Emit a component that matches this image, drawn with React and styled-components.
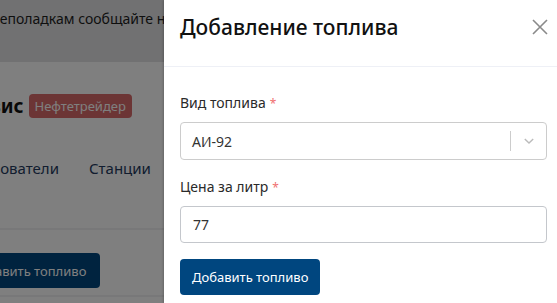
import styled, { createGlobalStyle } from 'styled-components';

const GlobalStyle = createGlobalStyle`
	html, body {
		margin: 0;
		padding: 0;
		background: #ffffff;
	}
	body {
		font-family: 'Noto Sans', 'Open Sans', Arial, sans-serif;
		overflow: hidden;
	}
	* {
		box-sizing: border-box;
	}
`;

const Screen = styled.div`
	position: relative;
	width: 557px;
	height: 303px;
	overflow: hidden;
	background: #ffffff;
`;

const Page = styled.div`
	display: flex;
	flex-direction: column;
	margin-left: -60px;
	width: 700px;
`;

const Banner = styled.div`
	height: 62px;
	padding: 9px 0 0 29px;
	background: #e2e2e4;
	font-size: 14px;
	color: #1f1f1f;
	white-space: nowrap;
`;

const Brand = styled.div`
	display: flex;
	align-items: center;
	gap: 5px;
	height: 88px;
	padding-left: 14px;
	white-space: nowrap;

	& h1 {
		margin: 0;
		font-size: 19px;
		font-weight: 700;
		color: #111111;
	}
`;

const Badge = styled.span`
	display: inline-flex;
	align-items: center;
	height: 24px;
	padding: 0 6px;
	border-radius: 4px;
	background: #d86a6a;
	color: #ffffff;
	font-size: 13px;
`;

const Tabs = styled.nav`
	display: flex;
	gap: 2px;
	height: 40px;
	padding-left: 2px;
	white-space: nowrap;
`;

const Tab = styled.div`
	display: flex;
	align-items: center;
	height: 40px;
	padding: 0 14px 2px;
	font-size: 15px;
	color: ${({ $active }) => ($active ? '#00467f' : '#243a5e')};
	border-bottom: 2px solid ${({ $active }) => ($active ? '#00467f' : 'transparent')};
`;

const Divider = styled.div`
	margin-top: 38px;
	height: 2px;
	background: #f1f1f3;
`;

const Toolbar = styled.div`
	display: flex;
	align-items: flex-start;
	height: 67px;
	padding: 23px 0 0 16px;
	border-bottom: 2px solid #f1f1f3;
`;

const DarkButton = styled.button`
	height: 35px;
	padding: 0 14px;
	border: none;
	border-radius: 4px;
	background: #00467f;
	color: #ffffff;
	font-family: inherit;
	font-size: 13px;
	white-space: nowrap;
`;

const Backdrop = styled.div`
	position: absolute;
	inset: 0;
	background: rgba(0, 0, 0, 0.5);
`;

const Drawer = styled.aside`
	position: absolute;
	top: 0;
	right: 0;
	bottom: 0;
	width: 393px;
	display: flex;
	flex-direction: column;
	background: #ffffff;
	box-shadow: -1px 0 2px rgba(0, 0, 0, 0.2);
`;

const DrawerHeader = styled.header`
	display: flex;
	align-items: center;
	justify-content: space-between;
	height: 67px;
	padding: 0 7px 12px 16px;
	border-bottom: 1px solid #eef0f6;

	& h2 {
		margin: 0;
		font-size: 21px;
		font-weight: 500;
		color: #111111;
	}
`;

const CloseButton = styled.button`
	display: flex;
	padding: 0;
	border: none;
	background: none;
	color: #8a8a8a;
`;

const Form = styled.form`
	display: flex;
	flex-direction: column;
	padding: 27px 10px 0 16px;
`;

const Field = styled.div`
	display: flex;
	flex-direction: column;
	gap: 9px;
	margin-bottom: 18px;
`;

const Label = styled.label`
	font-size: 14px;
	line-height: 18px;
	color: #2a2a2a;

	& span {
		margin-left: 4px;
		color: #f07070;
		font-size: 12px;
	}
`;

const SelectBox = styled.div`
	display: flex;
	align-items: center;
	height: 38px;
	border: 1px solid #cccccc;
	border-radius: 4px;
	font-size: 14px;
	color: #333333;
`;

const SelectValue = styled.div`
	flex: 1;
	padding-left: 11px;
`;

const Indicator = styled.div`
	display: flex;
	align-items: center;
	justify-content: center;
	width: 36px;
	height: 20px;
	border-left: 1px solid #cccccc;
	color: #bbbbbb;
`;

const Input = styled.input`
	height: 37px;
	padding: 0 12px;
	border: 1px solid #c4c7cc;
	border-radius: 4px;
	font-family: inherit;
	font-size: 14px;
	color: #333333;
	outline: none;
`;

const SubmitButton = styled(DarkButton)`
	align-self: flex-start;
	height: 36px;
	margin-top: -2px;
	padding: 0 12px;
`;

export default function App() {
	return (
		<Screen>
			<GlobalStyle />
			<Page>
				<Banner>По неполадкам сообщайте на почту support@nefte.ru</Banner>
				<Brand>
					<h1>Сервис</h1>
					<Badge>Нефтетрейдер</Badge>
				</Brand>
				<Tabs>
					<Tab>Пользователи</Tab>
					<Tab>Станции</Tab>
					<Tab $active>Топливо</Tab>
				</Tabs>
				<Divider />
				<Toolbar>
					<DarkButton>Добавить топливо</DarkButton>
				</Toolbar>
			</Page>
			<Backdrop />
			<Drawer>
				<DrawerHeader>
					<h2>Добавление топлива</h2>
					<CloseButton type="button" aria-label="Закрыть">
						<svg width="20" height="20" viewBox="0 0 20 20">
							<path d="M3 3 L17 17 M17 3 L3 17" stroke="currentColor" strokeWidth="1.6" fill="none" />
						</svg>
					</CloseButton>
				</DrawerHeader>
				<Form onSubmit={(e) => e.preventDefault()}>
					<Field>
						<Label>
							Вид топлива<span>*</span>
						</Label>
						<SelectBox>
							<SelectValue>АИ-92</SelectValue>
							<Indicator>
								<svg width="14" height="14" viewBox="0 0 20 20">
									<path d="M4 7 L10 13 L16 7" stroke="currentColor" strokeWidth="2" fill="none" />
								</svg>
							</Indicator>
						</SelectBox>
					</Field>
					<Field>
						<Label>
							Цена за литр<span>*</span>
						</Label>
						<Input defaultValue="77" />
					</Field>
					<SubmitButton type="submit">Добавить топливо</SubmitButton>
				</Form>
			</Drawer>
		</Screen>
	);
}
